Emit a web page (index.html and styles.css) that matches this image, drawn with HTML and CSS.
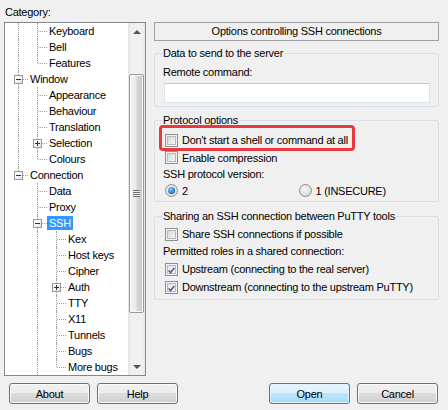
FILE: index.html
```html
<!DOCTYPE html>
<html>
<head>
<meta charset="utf-8">
<title>PuTTY Configuration</title>
<link rel="stylesheet" href="styles.css">
</head>
<body>
<div class="dialog">
  <div class="main">
    <div class="left">
      <div class="cat-label">Category:</div>
      <div class="tree">
        <div class="tree-rows">
          <div class="row"><span class="g v"></span><span class="g t"></span><span class="lbl">Keyboard</span></div>
          <div class="row"><span class="g v"></span><span class="g t"></span><span class="lbl">Bell</span></div>
          <div class="row"><span class="g v"></span><span class="g l"></span><span class="lbl">Features</span></div>
          <div class="row"><span class="g t"><span class="exp minus"></span></span><span class="lbl">Window</span></div>
          <div class="row"><span class="g v"></span><span class="g t"></span><span class="lbl">Appearance</span></div>
          <div class="row"><span class="g v"></span><span class="g t"></span><span class="lbl">Behaviour</span></div>
          <div class="row"><span class="g v"></span><span class="g t"></span><span class="lbl">Translation</span></div>
          <div class="row"><span class="g v"></span><span class="g t"><span class="exp plus"></span></span><span class="lbl">Selection</span></div>
          <div class="row"><span class="g v"></span><span class="g l"></span><span class="lbl">Colours</span></div>
          <div class="row"><span class="g l"><span class="exp minus"></span></span><span class="lbl">Connection</span></div>
          <div class="row"><span class="g"></span><span class="g t"></span><span class="lbl">Data</span></div>
          <div class="row"><span class="g"></span><span class="g t"></span><span class="lbl">Proxy</span></div>
          <div class="row"><span class="g"></span><span class="g t"><span class="exp minus"></span></span><span class="lbl selected">SSH</span></div>
          <div class="row"><span class="g"></span><span class="g v"></span><span class="g t"></span><span class="lbl">Kex</span></div>
          <div class="row"><span class="g"></span><span class="g v"></span><span class="g t"></span><span class="lbl">Host keys</span></div>
          <div class="row"><span class="g"></span><span class="g v"></span><span class="g t"></span><span class="lbl">Cipher</span></div>
          <div class="row"><span class="g"></span><span class="g v"></span><span class="g t"><span class="exp plus"></span></span><span class="lbl">Auth</span></div>
          <div class="row"><span class="g"></span><span class="g v"></span><span class="g t"></span><span class="lbl">TTY</span></div>
          <div class="row"><span class="g"></span><span class="g v"></span><span class="g t"></span><span class="lbl">X11</span></div>
          <div class="row"><span class="g"></span><span class="g v"></span><span class="g t"></span><span class="lbl">Tunnels</span></div>
          <div class="row"><span class="g"></span><span class="g v"></span><span class="g t"></span><span class="lbl">Bugs</span></div>
          <div class="row"><span class="g"></span><span class="g v"></span><span class="g l"></span><span class="lbl">More bugs</span></div>
        </div>
        <div class="scrollbar">
          <div class="sb-btn"><span class="arrow-up"></span></div>
          <div class="sb-track">
            <div class="sb-space top"></div>
            <div class="thumb"><span class="grip"></span></div>
            <div class="sb-space bottom"></div>
          </div>
          <div class="sb-btn"><span class="arrow-down"></span></div>
        </div>
      </div>
    </div>

    <div class="right">
      <div class="header">Options controlling SSH connections</div>

      <fieldset class="group g1">
        <legend>Data to send to the server</legend>
        <div class="field-label">Remote command:</div>
        <div class="textbox"></div>
      </fieldset>

      <fieldset class="group g2">
        <legend>Protocol options</legend>
        <div class="opt highlight-row">
          <span class="cb"></span><span>Don't start a shell or command at all</span>
          <span class="highlight"></span>
        </div>
        <div class="opt"><span class="cb"></span><span>Enable compression</span></div>
        <div class="field-label plain">SSH protocol version:</div>
        <div class="radios">
          <div class="opt radio-opt"><span class="rb on"></span><span>2</span></div>
          <div class="opt radio-opt second"><span class="rb"></span><span>1 (INSECURE)</span></div>
        </div>
      </fieldset>

      <fieldset class="group g3">
        <legend>Sharing an SSH connection between PuTTY tools</legend>
        <div class="opt"><span class="cb"></span><span>Share SSH connections if possible</span></div>
        <div class="field-label plain">Permitted roles in a shared connection:</div>
        <div class="opt"><span class="cb checked"><svg viewBox="0 0 13 13" width="13" height="13"><path d="M3.2 6.6 L5.4 9 L9.8 3.6" fill="none" stroke="#3b4f8c" stroke-width="1.7"/></svg></span><span>Upstream (connecting to the real server)</span></div>
        <div class="opt"><span class="cb checked"><svg viewBox="0 0 13 13" width="13" height="13"><path d="M3.2 6.6 L5.4 9 L9.8 3.6" fill="none" stroke="#3b4f8c" stroke-width="1.7"/></svg></span><span>Downstream (connecting to the upstream PuTTY)</span></div>
      </fieldset>
    </div>
  </div>

  <div class="buttons">
    <div class="btn-group">
      <button class="btn">About</button>
      <button class="btn">Help</button>
    </div>
    <div class="btn-group">
      <button class="btn default">Open</button>
      <button class="btn">Cancel</button>
    </div>
  </div>
</div>
</body>
</html>
```

FILE: styles.css
```css
* { box-sizing: border-box; }
html, body {
  margin: 0;
  padding: 0;
  background: #f0f0f0;
}
body {
  font-family: "Liberation Sans", Arial, sans-serif;
  font-size: 11px;
  letter-spacing: -0.25px;
  color: #000;
  width: 448px;
  height: 410px;
  overflow: hidden;
}
.dialog {
  padding: 0 0 0 4px;
}
.main {
  display: flex;
  gap: 8px;
}
.left {
  width: 142px;
  flex: none;
}
.cat-label {
  height: 22px;
  line-height: 13px;
  padding: 6px 0 0 1px;
}
.tree {
  display: flex;
  height: 354px;
  border: 1px solid #828790;
  background: #fff;
}
.tree-rows {
  flex: 1;
  overflow: hidden;
}
.row {
  display: flex;
  align-items: center;
  height: 16px;
  white-space: nowrap;
}
.g {
  flex: none;
  width: 19px;
  height: 16px;
  position: relative;
}
.g.v::before, .g.t::before, .g.l::before {
  content: "";
  position: absolute;
  left: 13px;
  top: 0;
  height: 16px;
  border-left: 1px dotted #a0a0a0;
}
.g.l::before { height: 8px; }
.g.t::after, .g.l::after {
  content: "";
  position: absolute;
  left: 14px;
  top: 8px;
  width: 9px;
  border-top: 1px dotted #a0a0a0;
}
.exp {
  position: absolute;
  left: 9px;
  top: 4px;
  width: 9px;
  height: 9px;
  border: 1px solid #999;
  background: linear-gradient(135deg, #ffffff 30%, #dedede);
  z-index: 1;
}
.exp::before {
  content: "";
  position: absolute;
  left: 1px;
  top: 3px;
  width: 5px;
  height: 1px;
  background: #333;
}
.exp.plus::after {
  content: "";
  position: absolute;
  left: 3px;
  top: 1px;
  width: 1px;
  height: 5px;
  background: #333;
}
.lbl {
  margin-left: 4px;
  padding: 0 2px;
  height: 14px;
  line-height: 14px;
}
.lbl.selected {
  background: #3399ff;
  color: #fff;
}
.scrollbar {
  width: 17px;
  flex: none;
  display: flex;
  flex-direction: column;
  background: linear-gradient(90deg, #e3e3e3, #f0f0f0 20%, #f0f0f0 80%, #e8e8e8);
}
.sb-btn {
  height: 17px;
  display: flex;
  align-items: center;
  justify-content: center;
}
.arrow-up {
  width: 0; height: 0;
  border-left: 4px solid transparent;
  border-right: 4px solid transparent;
  border-bottom: 4px solid #545454;
}
.arrow-down {
  width: 0; height: 0;
  border-left: 4px solid transparent;
  border-right: 4px solid transparent;
  border-top: 4px solid #545454;
}
.sb-track {
  flex: 1;
  display: flex;
  flex-direction: column;
}
.sb-space.top { height: 34px; }
.sb-space.bottom { flex: 1; }
.thumb {
  height: 239px;
  margin: 0 1px;
  border: 1px solid #9a9a9a;
  border-radius: 2px;
  background: linear-gradient(90deg, #f4f4f4, #e9e9e9 45%, #d6d6d6 55%, #c9c9c9);
  box-shadow: inset 0 0 0 1px #f8f8f8;
  display: flex;
  align-items: center;
  justify-content: center;
}
.grip {
  width: 7px;
  height: 7px;
  background: repeating-linear-gradient(180deg, #6f6f6f 0 1px, #efefef 1px 2px);
}

/* right column */
.right {
  width: 285px;
  flex: none;
  padding-top: 22px;
}
.header {
  height: 19px;
  border: 1px solid #a0a0a0;
  text-align: center;
  line-height: 17px;
}
.group {
  margin: 0;
  border: 1px solid #d5dfe5;
  border-radius: 3px;
  padding: 0 8px 0 8px;
  min-width: 0;
}
.group legend {
  padding: 0 1px;
  margin-left: -1px;
  line-height: 13px;
}
.g1 { margin-top: 6px; padding-bottom: 3px; }
.g2 { margin-top: 7px; padding-bottom: 2px; }
.g3 { margin-top: 8px; padding-bottom: 3px; }
.field-label {
  height: 14px;
  line-height: 14px;
  margin-top: 5px;
}
.textbox {
  margin-top: 4px;
  margin-left: 1px;
  width: 266px;
  height: 20px;
  background: #fff;
  border: 1px solid #dde2e8;
  border-top-color: #c9ccd2;
}
.opt {
  display: flex;
  align-items: center;
  height: 17px;
  gap: 4px;
  padding-left: 2px;
  position: relative;
}
.g2 .highlight-row { margin-top: 4px; height: 18px; }
.cb {
  width: 13px;
  height: 13px;
  flex: none;
  border: 1px solid #8e8f8f;
  background: linear-gradient(135deg, #cfd0d1, #f5f5f5 80%);
  box-shadow: inset 0 0 0 1px #f3f3f3, inset 0 0 0 2px #b7b9bd;
  display: flex;
}
.cb.checked {
  background: linear-gradient(135deg, #dedfe0, #f7f7f7 80%);
}
.highlight {
  position: absolute;
  left: -4px;
  top: -6px;
  width: 196px;
  height: 26px;
  border: 3px solid #e8393f;
  border-radius: 4px;
}
.plain { margin-top: 0; height: 16px; line-height: 16px; }
.radios {
  display: flex;
}
.radio-opt { width: 135px; }
.rb {
  width: 13px;
  height: 13px;
  flex: none;
  border-radius: 50%;
  border: 1px solid #8e8f8f;
  background: radial-gradient(circle at 40% 40%, #f6f6f6, #d4d4d4 90%);
  position: relative;
}
.rb.on::after {
  content: "";
  position: absolute;
  left: 2px;
  top: 2px;
  width: 7px;
  height: 7px;
  border-radius: 50%;
  background: radial-gradient(circle at 40% 35%, #7fd0f8, #1b6bc1 70%, #0e4d95);
}
.g3 .opt { height: 18px; }
.g3 .plain { height: 17px; line-height: 17px; }
.g3 legend + .opt { margin-top: 2px; }

/* bottom buttons */
.buttons {
  display: flex;
  justify-content: space-between;
  padding: 7px 10px 0 5px;
}
.btn-group {
  display: flex;
  gap: 7px;
}
.btn {
  width: 81px;
  height: 21px;
  font-family: "Liberation Sans", Arial, sans-serif;
  font-size: 11px;
  letter-spacing: -0.25px;
  color: #000;
  border: 1px solid #707070;
  border-radius: 3px;
  background: linear-gradient(#f2f2f2 0%, #ebebeb 50%, #dddddd 50%, #cfcfcf 100%);
  box-shadow: inset 0 0 0 1px #fbfbfb;
  padding: 0;
}
.btn.default {
  border-color: #3c7fb1;
  background: linear-gradient(#eaf6fd 0%, #d9f0fc 50%, #bee6fd 50%, #a7d9f5 100%);
  box-shadow: inset 0 0 0 1px #e0f2fc;
}
```
